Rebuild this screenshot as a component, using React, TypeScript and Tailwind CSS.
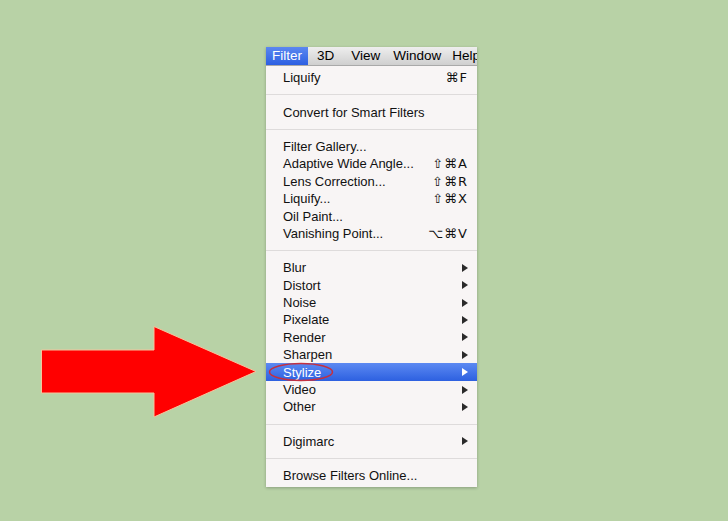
import React from 'react'

type Item =
  | { kind: 'item'; label: string; shortcut?: string; sub?: boolean; active?: boolean }
  | { kind: 'sep' }

const ITEMS: Item[] = [
  { kind: 'item', label: 'Liquify', shortcut: '⌘F' },
  { kind: 'sep' },
  { kind: 'item', label: 'Convert for Smart Filters' },
  { kind: 'sep' },
  { kind: 'item', label: 'Filter Gallery...' },
  { kind: 'item', label: 'Adaptive Wide Angle...', shortcut: '⇧⌘A' },
  { kind: 'item', label: 'Lens Correction...', shortcut: '⇧⌘R' },
  { kind: 'item', label: 'Liquify...', shortcut: '⇧⌘X' },
  { kind: 'item', label: 'Oil Paint...' },
  { kind: 'item', label: 'Vanishing Point...', shortcut: '⌥⌘V' },
  { kind: 'sep' },
  { kind: 'item', label: 'Blur', sub: true },
  { kind: 'item', label: 'Distort', sub: true },
  { kind: 'item', label: 'Noise', sub: true },
  { kind: 'item', label: 'Pixelate', sub: true },
  { kind: 'item', label: 'Render', sub: true },
  { kind: 'item', label: 'Sharpen', sub: true },
  { kind: 'item', label: 'Stylize', sub: true, active: true },
  { kind: 'item', label: 'Video', sub: true },
  { kind: 'item', label: 'Other', sub: true },
  { kind: 'sep' },
  { kind: 'item', label: 'Digimarc', sub: true },
  { kind: 'sep' },
  { kind: 'item', label: 'Browse Filters Online...' },
]

const FONT = "font-['Liberation_Sans','DejaVu_Sans',sans-serif]"

function SubArrow({ active }: { active?: boolean }) {
  return (
    <svg width="6" height="8" viewBox="0 0 6 8" aria-hidden="true">
      <path d="M0 0L6 4L0 8Z" fill={active ? '#ffffff' : '#2a2a2a'} />
    </svg>
  )
}

function RedArrow() {
  return (
    <svg width="216" height="92" viewBox="0 0 216 92" className="mt-[279px] shrink-0" aria-hidden="true">
      <polygon
        points="0.5,24 113,24 113,0.5 215,45.5 113,91 113,67 0.5,67"
        fill="#ff0000"
        stroke="#f6c49c"
        strokeWidth="1"
      />
    </svg>
  )
}

export default function App() {
  return (
    <div className={`h-[521px] w-[728px] overflow-hidden bg-[#b8d2a6] ${FONT}`}>
      <div className="flex items-start pl-[41px] pt-[47px]">
        <RedArrow />

        {/* Menu */}
        <div className="ml-[9px] flex w-[211px] flex-col overflow-hidden bg-[#f8f5f5] shadow-[0_1px_3px_rgba(0,0,0,0.25)]">
          {/* Menu bar */}
          <div className="flex h-[19px] items-center whitespace-nowrap border-b border-[#a9a9a9] bg-gradient-to-b from-[#eeeeee] to-[#cfcfcf] text-[13.5px] leading-none text-black">
            <span className="flex h-full items-center bg-gradient-to-b from-[#5b87f0] to-[#2c5fe2] px-[6px] text-white">Filter</span>
            <span className="ml-[9px]">3D</span>
            <span className="ml-[17px]">View</span>
            <span className="ml-[13px]">Window</span>
            <span className="ml-[11px]">Help</span>
          </div>

          {/* Items */}
          <div className="flex flex-col pb-[3px] pt-[3px]">
            {ITEMS.map((it, i) =>
              it.kind === 'sep' ? (
                <div key={i} className="flex h-[17px] items-center">
                  <div className="h-px w-full bg-[#dedbdb]" />
                </div>
              ) : (
                <div
                  key={i}
                  className={`relative flex h-[17.4px] items-center justify-between pl-[17px] pr-[9px] text-[13px] leading-none ${
                    it.active ? 'bg-gradient-to-b from-[#5c89f2] to-[#2d60e0] text-white' : 'text-[#111]'
                  }`}
                >
                  <span>{it.label}</span>
                  {it.shortcut && (
                    <span className="font-['DejaVu_Sans',sans-serif] text-[13px] tracking-[1px]">{it.shortcut}</span>
                  )}
                  {it.sub && <SubArrow active={it.active} />}
                  {it.active && (
                    <svg
                      className="absolute left-[2px] top-[-1px]"
                      width="66"
                      height="20"
                      viewBox="0 0 66 20"
                      aria-hidden="true"
                    >
                      <ellipse cx="33" cy="10" rx="31.5" ry="8.5" fill="none" stroke="#c43040" strokeWidth="1.5" />
                    </svg>
                  )}
                </div>
              )
            )}
          </div>
        </div>
      </div>
    </div>
  )
}
